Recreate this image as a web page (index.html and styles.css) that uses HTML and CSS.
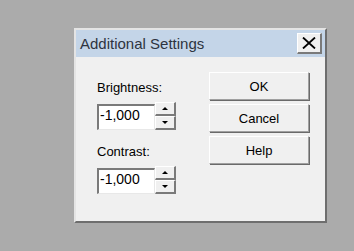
FILE: index.html
```
<!DOCTYPE html>
<html>
<head>
<meta charset="utf-8">
<link rel="stylesheet" href="styles.css">
</head>
<body>
<div class="dialog">
  <div class="titlebar">
    <span class="title">Additional Settings</span>
    <div class="close">
      <svg width="14" height="12" viewBox="0 0 14 12"><path d="M1 0.5 L13 11.5 M13 0.5 L1 11.5" stroke="#000" stroke-width="1.8" fill="none"/></svg>
    </div>
  </div>
  <div class="content">
    <div class="fields">
      <div class="label">Brightness:</div>
      <div class="spinrow">
        <div class="edit">-1,000</div>
        <div class="spin">
          <div class="sbtn"><span class="arrow up"></span></div>
          <div class="sbtn"><span class="arrow down"></span></div>
        </div>
      </div>
      <div class="label second">Contrast:</div>
      <div class="spinrow">
        <div class="edit">-1,000</div>
        <div class="spin">
          <div class="sbtn"><span class="arrow up"></span></div>
          <div class="sbtn"><span class="arrow down"></span></div>
        </div>
      </div>
    </div>
    <div class="buttons">
      <div class="btn">OK</div>
      <div class="btn">Cancel</div>
      <div class="btn">Help</div>
    </div>
  </div>
</div>
</body>
</html>
```
FILE: styles.css
```
html, body {
  margin: 0;
  padding: 0;
  background: #ababab;
}
body {
  width: 354px;
  height: 251px;
  overflow: hidden;
  font-family: "Liberation Sans", Arial, sans-serif;
}
.dialog {
  box-sizing: border-box;
  margin: 28px 0 0 74px;
  width: 253px;
  height: 195px;
  background: #f0f0f0;
  border-style: solid;
  border-width: 2px;
  border-color: #e4e4e4 #6e6e6e #6e6e6e #e4e4e4;
  display: flex;
  flex-direction: column;
}
.titlebar {
  height: 27px;
  background: #c4d5e8;
  display: flex;
  align-items: center;
  justify-content: space-between;
  padding: 0 3px 0 4px;
}
.title {
  font-size: 15px;
  line-height: 17px;
  color: #2e3440;
}
.close {
  box-sizing: border-box;
  width: 25px;
  height: 21px;
  background: #f0f0f0;
  border-style: solid;
  border-width: 1px 2px 2px 1px;
  border-color: #ffffff #7a7a7a #7a7a7a #ffffff;
  display: flex;
  align-items: center;
  justify-content: center;
}
.close svg {
  display: block;
}
.content {
  display: flex;
  padding: 15px 0 0 21px;
}
.fields {
  width: 79px;
  margin-top: 8px;
}
.label {
  font-size: 13px;
  line-height: 15px;
  color: #000;
}
.label.second {
  margin-top: 14px;
}
.spinrow {
  display: flex;
  align-items: flex-end;
  margin-top: 7px;
  height: 28px;
}
.edit {
  box-sizing: border-box;
  width: 58px;
  height: 26px;
  background: #fff;
  border-style: solid;
  border-width: 2px 1px 1px 2px;
  border-color: #7a7a7a #e8e8e8 #e8e8e8 #7a7a7a;
  font-size: 14px;
  line-height: 17px;
  padding: 1px 0 0 1px;
  color: #000;
}
.spin {
  width: 21px;
  height: 28px;
  display: flex;
  flex-direction: column;
}
.sbtn {
  box-sizing: border-box;
  height: 14px;
  background: #f0f0f0;
  border-style: solid;
  border-width: 1px 2px 2px 1px;
  border-color: #ffffff #7a7a7a #7a7a7a #ffffff;
  display: flex;
  align-items: center;
  justify-content: center;
}
.arrow {
  width: 0;
  height: 0;
  border-left: 3px solid transparent;
  border-right: 3px solid transparent;
}
.arrow.up {
  border-bottom: 3px solid #000;
}
.arrow.down {
  border-top: 3px solid #000;
}
.buttons {
  margin-left: 33px;
  display: flex;
  flex-direction: column;
  gap: 4px;
}
.btn {
  box-sizing: border-box;
  width: 100px;
  height: 28px;
  background: #f0f0f0;
  border-style: solid;
  border-width: 1px 1px 1px 1px;
  border-color: #ffffff #a0a0a0 #a0a0a0 #ffffff;
  box-shadow: 1px 1px 0 #6a6a6a;
  display: flex;
  align-items: center;
  justify-content: center;
  font-size: 13px;
  color: #000;
}
```
